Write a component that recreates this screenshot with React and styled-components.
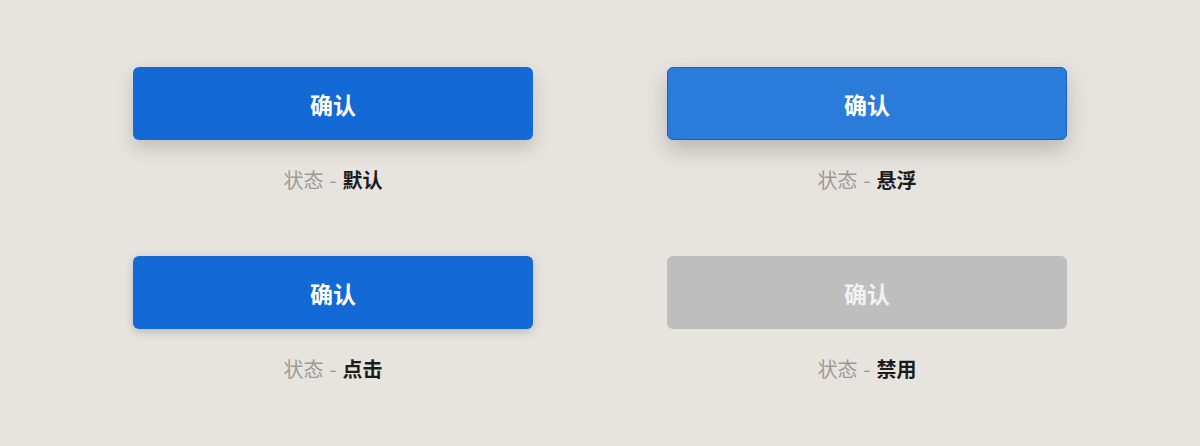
import React from 'react'
import styled, { createGlobalStyle, css } from 'styled-components'

const Global = createGlobalStyle`
  html, body {
    margin: 0;
    padding: 0;
    background: #e7e4e0;
  }
  body {
    font-family: "Noto Sans CJK SC", "Noto Sans", sans-serif;
  }
`

const states = [
  { key: 'default', name: '默认' },
  { key: 'hover', name: '悬浮' },
  { key: 'active', name: '点击' },
  { key: 'disabled', name: '禁用' },
]

const App = () => {
  return (
    <>
      <Global />
      <Page>
        <Grid>
          {states.map((s) => (
            <Cell key={s.key}>
              <Button variant={s.key} disabled={s.key === 'disabled'}>确认</Button>
              <Label>
                <Muted>状态</Muted>
                <Dash>-</Dash>
                <Strong>{s.name}</Strong>
              </Label>
            </Cell>
          ))}
        </Grid>
      </Page>
    </>
  )
}

const Page = styled.div`
  width: 1200px;
  height: 446px;
  box-sizing: border-box;
  padding: 67px 0 0 133px;
`

const Grid = styled.div`
  display: grid;
  grid-template-columns: 400px 400px;
  column-gap: 134px;
  row-gap: 63px;
`

const Cell = styled.div`
  display: flex;
  flex-direction: column;
  align-items: center;
  gap: 27px;
`

const variants = {
  default: css`
    background: #136ad6;
    box-shadow: 0 8px 18px rgba(60, 50, 40, 0.22);
  `,
  hover: css`
    background: #2b7bdb;
    border-color: #1a62c8;
    box-shadow: 0 10px 22px rgba(60, 50, 40, 0.26);
  `,
  active: css`
    background: #136ad6;
    box-shadow: 0 3px 8px rgba(60, 50, 40, 0.25);
  `,
  disabled: css`
    background: #bebebe;
    color: #f2f2f2;
  `,
}

const Button = styled.button`
  width: 400px;
  height: 73px;
  box-sizing: border-box;
  border: 1px solid transparent;
  border-radius: 6px;
  color: #ffffff;
  font-family: "Noto Sans CJK SC", "Noto Sans", sans-serif;
  font-size: 23px;
  font-weight: 600;
  cursor: pointer;
  ${({ variant }) => variants[variant]}
  &:disabled {
    cursor: default;
  }
`

const Label = styled.div`
  display: flex;
  align-items: center;
  gap: 6px;
  font-size: 20px;
  line-height: 26px;
`

const Muted = styled.span`
  color: #9c9a98;
  font-weight: 400;
`

const Dash = styled(Muted)``

const Strong = styled.span`
  color: #1c1c1c;
  font-weight: 700;
`

export default App
